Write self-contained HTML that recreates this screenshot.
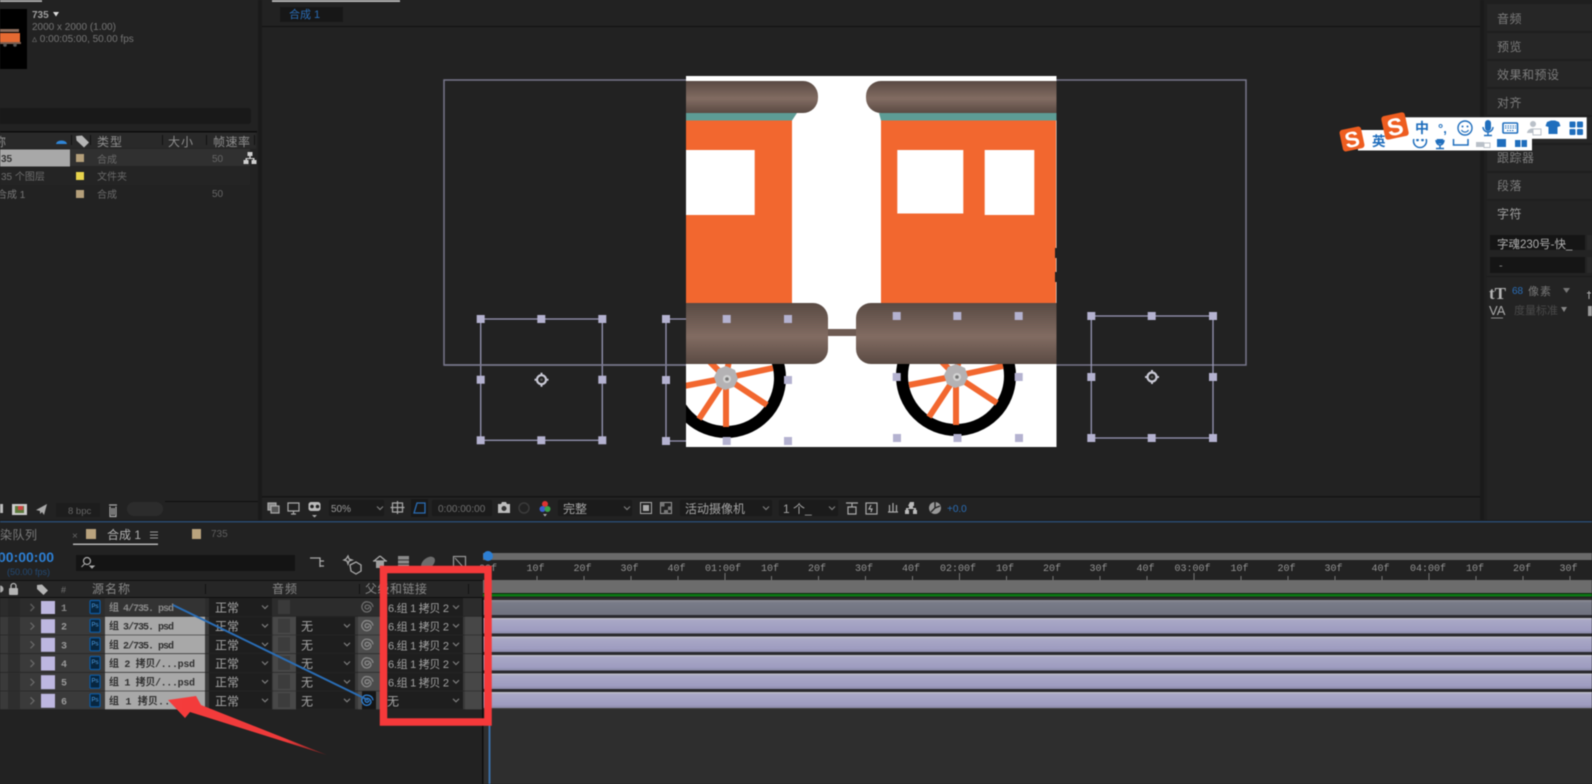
<!DOCTYPE html>
<html lang="zh"><head><meta charset="utf-8"><title>After Effects</title>
<style>
html,body{margin:0;padding:0;background:#222;width:1592px;height:784px;overflow:hidden}
svg{display:block;filter:blur(.45px)}
text{font-family:"Liberation Sans","Noto Sans CJK SC",sans-serif}
.m{font-family:"Liberation Mono","Noto Sans CJK SC",monospace}
.n{font-family:"Liberation Mono","Noto Sans CJK SC",monospace;font-weight:700;font-size:10px;fill:#303030}
.r{font-family:"Liberation Mono",monospace;font-size:10px;fill:#929292;text-anchor:middle}
.t{font-size:12px;fill:#a4a4a4}
.l{font-size:12px;fill:#8e8e8e;letter-spacing:1px}
.d{font-size:10px;fill:#747474}
.p{font-size:11px;fill:#a2a2a2}
</style></head><body>
<svg xmlns="http://www.w3.org/2000/svg" width="1592" height="784" viewBox="0 0 1592 784">
<defs>
<linearGradient id="br" x1="0" y1="0" x2="0" y2="1"><stop offset="0" stop-color="#594a43"/><stop offset=".55" stop-color="#826c62"/><stop offset="1" stop-color="#5a4a43"/></linearGradient>
<linearGradient id="bar" x1="0" y1="0" x2="0" y2="1"><stop offset="0" stop-color="#c6c6cc"/><stop offset=".14" stop-color="#a9a8c6"/><stop offset=".8" stop-color="#9e9cc0"/><stop offset="1" stop-color="#8b8aa8"/></linearGradient>
<linearGradient id="bar1" x1="0" y1="0" x2="0" y2="1"><stop offset="0" stop-color="#8d8f96"/><stop offset=".2" stop-color="#787b88"/><stop offset="1" stop-color="#70737f"/></linearGradient>
<linearGradient id="arrow" x1="0" y1="0" x2="1" y2="0"><stop offset="0" stop-color="#f53c3c"/><stop offset=".75" stop-color="#ee3a3a"/><stop offset="1" stop-color="#6c2020"/></linearGradient>
<clipPath id="img"><rect x="686" y="76" width="370.500" height="371"/></clipPath>
<clipPath id="ime"><rect x="1340" y="139" width="200" height="14"/></clipPath>
<g id="h"><rect x="-4" y="-4" width="8" height="8" fill="#b4b2d0"/></g>
<g id="chev"><path d="M-3-1.500L0 1.500 3-1.500" fill="none" stroke="#7c7c7c" stroke-width="1.200"/></g>
<g id="spiral"><path d="M1 0a2 2 0 1 1-2-2 3.800 3.800 0 0 1 4 4 4.500 4.500 0 0 1-8 1 5 5 0 0 1 5-8 5.500 5.500 0 0 1 5 5" fill="none" stroke="currentColor" stroke-width="1.300"/></g>
<g id="ps"><rect x="0" y="0" width="10" height="13" rx="1" fill="#08263f" stroke="#0d5ba5" stroke-width="1.200"/></g>
<g id="anchor"><circle r="4.500" fill="none" stroke="#c8c8d4" stroke-width="2.200"/><path d="M-7 0h3M4 0h3M0-7v3M0 4v3" stroke="#c8c8d4" stroke-width="2"/><circle r="1.300" fill="#555"/></g>
<g id="wheel"><circle r="54" fill="none" stroke="#000" stroke-width="12"/>
<g stroke="#f2672f" stroke-width="6"><path d="M0 0L47-10M0 0L41 27M0 0V49M0 0L-27 41M0 0L-47 9M0 0L-24-24M0 0L8-47"/></g>
<path d="M0-12L9-8 12 1 8 9-1 12-9 8-12-1-8-9Z" fill="#b4b2b4"/><circle cx="1" cy="1" r="4" fill="#d2d2d2"/><circle cx="1" cy="1" r="1.800" fill="#777"/></g>
</defs>

<rect width="1592" height="784" fill="#222"/>

<!-- left project panel -->
<rect x="0" y="0" width="42" height="2" fill="#aaa"/>
<rect x="0" y="9" width="27" height="60" fill="#000"/>
<g><rect x="0" y="29" width="19" height="3" fill="#8a6a5a"/><rect x="0" y="33" width="20" height="9" fill="#e56a32"/><rect x="0" y="42" width="21" height="2" fill="#805f50"/><circle cx="5" cy="45" r="1.800" fill="#555"/><circle cx="15" cy="45" r="1.800" fill="#555"/></g>
<text x="32" y="18" font-size="10" font-weight="700" fill="#9f9f9f">735</text><path d="M53 12h6l-3 4.500z" fill="#ddd"/>
<text x="32" y="30" class="d">2000 x 2000 (1.00)</text>
<text x="32" y="42" class="d">▵ 0:00:05:00, 50.00 fps</text>
<rect x="-6" y="108" width="257" height="16" rx="3" fill="#191919"/>
<rect x="0" y="131" width="257" height="1.500" fill="#0c0c0c"/>
<rect x="0" y="132.500" width="256" height="16" fill="#292929"/>
<text x="-6" y="146" font-size="12" fill="#8e8e8e">称</text>
<path d="M56 144a5.500 3.500 0 0 1 11 0z" fill="#2f86d8"/>
<path d="M76 136l6-.5 7 7-5 5-7.500-7z" fill="#b5b5b5"/>
<text x="97" y="146" class="l">类型</text>
<text x="168" y="146" class="l">大小</text>
<text x="213" y="146" class="l" style="letter-spacing:.5px">帧速率</text>
<g fill="#111"><rect x="71" y="135" width="1" height="10"/><rect x="90" y="135" width="1" height="10"/><rect x="162" y="135" width="1" height="10"/><rect x="206" y="135" width="1" height="10"/><rect x="254" y="135" width="1" height="10"/></g>
<rect x="0" y="149" width="250" height="17" fill="#303030"/>
<rect x="0" y="149.500" width="70" height="17" fill="#a8a8a8"/>
<text x="1" y="162" font-size="10" font-weight="700" fill="#333">35</text>
<rect x="76" y="154" width="8" height="8" fill="#b49f7a"/>
<text x="97" y="163" font-size="10" fill="#686868">合成</text>
<text x="212" y="162" font-size="10" fill="#666">50</text>
<path d="M247.500 152h5v4h-1.800v2h3.800v2h2v4h-5v-4h1.500v-1h-6v1h1.500v4h-5v-4h2v-2h3.800v-2h-1.800z" fill="#cfcfcf"/>
<rect x="0" y="167" width="250" height="18" fill="#242424"/>
<text x="1" y="180" font-size="10" fill="#6e6e6e">35 个图层</text>
<rect x="76" y="172" width="8" height="8" fill="#e8d44c"/>
<text x="97" y="180" font-size="10" fill="#686868">文件夹</text>
<text x="-3" y="198" font-size="10" fill="#777">合成 1</text>
<rect x="76" y="190" width="8" height="8" fill="#b49f7a"/>
<text x="97" y="198" font-size="10" fill="#686868">合成</text>
<text x="212" y="197" font-size="10" fill="#666">50</text>

<!-- left footer -->
<rect x="165" y="501" width="93" height="1" fill="#0f0f0f"/>
<rect x="0" y="504" width="3" height="9" fill="#bbb"/>
<rect x="12" y="504" width="15" height="11" fill="#ccc"/><rect x="15" y="506" width="9" height="7" fill="#5c7a3c"/><rect x="18" y="506" width="5" height="4" fill="#c44"/>
<path d="M36 510l11-6-3 11-2-3-2 2v-3z" fill="#a9a9a9"/>
<rect x="56" y="503" width="44" height="14" fill="#1d1d1d"/>
<text x="68" y="514" font-size="9.500" fill="#666">8 bpc</text>
<path d="M109 505h8M110 506.500v10h6v-10M112 508v7M114 508v7" fill="none" stroke="#aaa" stroke-width="1.200"/>
<rect x="127" y="502" width="36" height="14" rx="7" fill="#2c2c2c"/>

<!-- vertical dividers -->
<rect x="258" y="0" width="4" height="521" fill="#1a1a1a"/>
<rect x="1480" y="0" width="4" height="521" fill="#1a1a1a"/>

<!-- comp panel top -->
<rect x="272" y="0" width="128" height="2" fill="#b4b4b4"/>
<rect x="280" y="7" width="63" height="15" fill="#171717"/>
<text x="289" y="18" font-size="11" fill="#2a6cb5">合成 1</text>
<rect x="262" y="26" width="1218" height="1" fill="#111"/>

<!-- composition box -->
<rect x="444" y="80" width="802" height="285" fill="none" stroke="#77768a" stroke-width="1.500"/>
<rect x="480.700" y="319" width="121.600" height="121.300" fill="none" stroke="#9796b4" stroke-width="1.300"/>
<path d="M666 319h21M666 319v122M666 441h21" fill="none" stroke="#9796b4" stroke-width="1.300"/>
<rect x="1091.300" y="316" width="121.700" height="122" fill="none" stroke="#9796b4" stroke-width="1.300"/>

<!-- image -->
<rect x="686" y="76" width="370.500" height="371" fill="#fff"/>
<g clip-path="url(#img)">
<use href="#wheel" x="726" y="378"/>
<use href="#wheel" x="956" y="376"/>
<rect x="670" y="81" width="148" height="32" rx="15" fill="url(#br)"/>
<rect x="866" y="81" width="210" height="32" rx="15" fill="url(#br)"/>
<path d="M686 113H797L792 120.500H686Z" fill="#5d9c95"/>
<path d="M879 113H1057V120.500H881Z" fill="#5d9c95"/>
<rect x="686" y="120.500" width="106" height="183" fill="#f2672f"/>
<rect x="881" y="120.500" width="175" height="183" fill="#f2672f"/>
<rect x="686" y="150" width="68.700" height="65" fill="#fff"/>
<rect x="897.300" y="150" width="66" height="63.500" fill="#fff"/>
<rect x="984.700" y="150" width="49.600" height="65" fill="#fff"/>
<rect x="826" y="329" width="32" height="7" fill="#6d5a52"/>
<rect x="660" y="303" width="168" height="61" rx="15" fill="url(#br)"/>
<rect x="856" y="303" width="220" height="61" rx="15" fill="url(#br)"/>
<rect x="1055" y="248" width="2" height="10" fill="#222"/><rect x="1055" y="272" width="2" height="10" fill="#222"/>
</g>
<path d="M444 365h242" stroke="#77768a" stroke-width="1.500"/>

<!-- handles -->
<g>
<use href="#h" x="480.700" y="319"/><use href="#h" x="541.300" y="319"/><use href="#h" x="602.300" y="319"/>
<use href="#h" x="480.700" y="379.700"/><use href="#h" x="602.300" y="379.700"/>
<use href="#h" x="480.700" y="440.300"/><use href="#h" x="541.300" y="440.300"/><use href="#h" x="602.300" y="440.300"/>
<use href="#anchor" x="541.500" y="379.700"/>
<use href="#h" x="666" y="319"/><use href="#h" x="726.700" y="319"/><use href="#h" x="788" y="319"/>
<use href="#h" x="666" y="380"/><use href="#h" x="788" y="380"/>
<use href="#h" x="666" y="441"/><use href="#h" x="726.700" y="441"/><use href="#h" x="788" y="441"/>
<use href="#h" x="896.700" y="316"/><use href="#h" x="957.300" y="316"/><use href="#h" x="1018.700" y="316"/>
<use href="#h" x="896.700" y="377"/><use href="#h" x="1018.700" y="377"/>
<use href="#h" x="897" y="438"/><use href="#h" x="957.500" y="438"/><use href="#h" x="1019" y="438"/>
<use href="#h" x="1091.300" y="316"/><use href="#h" x="1151.700" y="316"/><use href="#h" x="1213" y="316"/>
<use href="#h" x="1091.300" y="377"/><use href="#h" x="1213" y="377"/>
<use href="#h" x="1091.300" y="438"/><use href="#h" x="1151.700" y="438"/><use href="#h" x="1213" y="438"/>
<use href="#anchor" x="1152" y="377"/>
</g>

<!-- comp footer -->
<rect x="262" y="496" width="1218" height="1.500" fill="#141414"/>
<g fill="none" stroke="#aaa" stroke-width="1.200">
<rect x="268" y="503" width="8" height="7" fill="#888"/><rect x="271" y="506" width="8" height="7" fill="#555"/>
<path d="M288 503h11v8h-11zM291 514h5M293.500 511v3"/>
<rect x="392.500" y="503" width="10" height="9"/><path d="M397.500 501v13M390.500 507.500h14"/>
</g>
<path d="M308.500 504a3 3 0 0 1 3-2h6a3 3 0 0 1 3 2v5a3 3 0 0 1-3 2h-6a3 3 0 0 1-3-2z" fill="#bbb"/><circle cx="312" cy="506.500" r="1.800" fill="#222"/><circle cx="317.500" cy="506.500" r="1.800" fill="#222"/><path d="M312 515h5l-2.500 2.500z" fill="#aaa"/>
<rect x="329" y="500" width="55" height="16" fill="#1b1b1b"/>
<text x="331" y="512" font-size="10" fill="#999">50%</text><use href="#chev" x="380" y="508"/>
<rect x="411" y="499" width="17" height="18" fill="#181818"/>
<path d="M414 513l3-10h8v10z" fill="none" stroke="#2a6db5" stroke-width="1.300"/>
<rect x="432" y="500" width="60" height="16" fill="#1b1b1b"/>
<text x="438" y="512" font-size="10" fill="#6d6d6d">0:00:00:00</text>
<path d="M498 504h3l1-2h4l1 2h3v9h-12z" fill="#bdbdbd"/><circle cx="504" cy="508.500" r="2.500" fill="#333"/>
<circle cx="524" cy="508" r="5" fill="none" stroke="#3a3a3a" stroke-width="1.500"/>
<circle cx="545" cy="504" r="3" fill="#d33"/><circle cx="542.500" cy="509" r="3" fill="#3a5fd0"/><circle cx="547.500" cy="509" r="3" fill="#3aa04a"/><path d="M543 514h4l-2 2.500z" fill="#aaa"/>
<rect x="558" y="500" width="74" height="16" fill="#1b1b1b"/>
<text x="563" y="513" font-size="12" fill="#a4a4a4">完整</text><use href="#chev" x="627" y="508"/>
<rect x="640.500" y="502.500" width="11" height="11" fill="none" stroke="#aaa"/><rect x="643" y="505" width="6" height="6" fill="#aaa"/>
<rect x="660.500" y="502.500" width="11" height="11" fill="none" stroke="#999"/><path d="M660.500 502.500h4v4h-4zM668 506.500h3.500v3.500H668zM664 510h4v3.500h-4z" fill="#777"/>
<rect x="680" y="500" width="92" height="16" fill="#1b1b1b"/>
<text x="685" y="513" font-size="12" fill="#a4a4a4">活动摄像机</text><use href="#chev" x="766" y="508"/>
<rect x="779" y="500" width="59" height="16" fill="#1b1b1b"/>
<text x="783" y="513" font-size="12" fill="#a4a4a4">1 个_</text><use href="#chev" x="832" y="508"/>
<g fill="none" stroke="#aaa" stroke-width="1.200"><path d="M846 503h12M852 503v4M848 507h8v7h-8z"/><rect x="866" y="503" width="11" height="11"/><path d="M871 505l-2 4h3l-1 3"/><path d="M888 512h10M889.500 505v7M893 503v9M896.500 505v7"/></g>
<path d="M910 502h4v4h-1v2h3v2h1v4h-4v-4h1v-1h-6v1h1v4h-4v-4h1v-2h3v-2h-1z" fill="#bbb"/>
<circle cx="935" cy="508" r="6" fill="#999"/><path d="M935 502v6l5-2M935 508l-4 4" stroke="#222" stroke-width="1.400" fill="none"/>
<text x="947" y="512" font-size="10" fill="#2a6db5">+0.0</text>

<!-- right panel -->
<rect x="1484" y="0" width="108" height="521" fill="#1f1f1f"/>
<g fill="#262626"><rect x="1487" y="4" width="105" height="27"/><rect x="1487" y="33" width="105" height="26"/><rect x="1487" y="61" width="105" height="26"/><rect x="1487" y="89" width="105" height="26"/><rect x="1487" y="117" width="105" height="26"/><rect x="1487" y="145" width="105" height="26"/><rect x="1487" y="173" width="105" height="26"/><rect x="1487" y="201" width="105" height="320" fill="#232323"/></g>
<g font-size="12" fill="#7c7c7c" letter-spacing=".5">
<text x="1497" y="23">音频</text><text x="1497" y="51">预览</text><text x="1497" y="79">效果和预设</text><text x="1497" y="107">对齐</text><text x="1497" y="162">跟踪器</text><text x="1497" y="190">段落</text><text x="1497" y="218" fill="#a0a0a0">字符</text></g>
<rect x="1490" y="235" width="95" height="15" fill="#151515"/><rect x="1587" y="235" width="5" height="15" fill="#2a2a2a"/>
<text x="1497" y="248" font-size="11.500" fill="#b0b0b0">字魂230号-快_</text>
<rect x="1490" y="257" width="95" height="16" fill="#151515"/><rect x="1587" y="257" width="5" height="16" fill="#2a2a2a"/>
<text x="1499" y="269" font-size="11" fill="#888">-</text>
<rect x="1487" y="276" width="105" height="1" fill="#1a1a1a"/>
<text x="1489" y="299" font-size="17" font-weight="700" fill="#b5b5b5" style="font-family:'Liberation Serif',serif">tT</text>
<text x="1512" y="294" font-size="10" fill="#2a6db5">68</text>
<text x="1528" y="295" font-size="11" fill="#777" letter-spacing="1">像素</text>
<path d="M1563 288h7l-3.500 5z" fill="#777"/>
<text x="1489" y="315" font-size="13" fill="#aaa">VA</text>
<path d="M1491 318h12" stroke="#888"/>
<text x="1514" y="314" font-size="11" fill="#4a4a4a">度量标准</text>
<path d="M1561 307h6l-3 5z" fill="#888"/>
<path d="M1589 291v8M1587 293h4" stroke="#aaa" fill="none"/><rect x="1588" y="306" width="4" height="10" fill="#999"/>

<!-- IME lower -->
<rect x="1358" y="130" width="174" height="20.500" fill="#fff"/>
<text x="1372" y="146" font-size="13.500" font-weight="700" fill="#1f6ebd">英</text>
<g clip-path="url(#ime)" fill="none" stroke="#1f6ebd" stroke-width="1.500">
<circle cx="1420" cy="141" r="6.500"/><circle cx="1417.500" cy="140" r=".6"/><circle cx="1422.500" cy="140" r=".6"/>
<path d="M1436 140a4 5 0 0 0 8 0M1440 145v3M1436 148.500h8"/><rect x="1437.500" y="136" width="5" height="7" fill="#1f6ebd"/>
<rect x="1453.500" y="135" width="14.500" height="10"/>
<path d="M1476 142h8v5h-8z" fill="#b9c0c8" stroke="none"/><rect x="1484" y="143" width="6" height="4.500" fill="#fff" stroke="#b9c0c8" stroke-width="1"/>
<path d="M1497 139h9v8h-9z" fill="#1f6ebd" stroke="none"/>
<path d="M1515 140h5.500v7H1515zM1521.500 140h5.500v7h-5.500z" fill="#1f6ebd" stroke="none"/>
</g>
<g transform="rotate(-12 1352 139)"><rect x="1341" y="128" width="22" height="22" rx="3" fill="#ee5d20"/><text x="1352" y="147" font-size="22" font-weight="700" fill="#fff" text-anchor="middle">S</text></g>

<!-- IME upper -->
<rect x="1405" y="117.300" width="181.700" height="21.500" fill="#fff"/>
<g transform="rotate(-12 1395 126)"><rect x="1383" y="114" width="24" height="24" rx="3" fill="#ee5d20"/><text x="1395" y="135" font-size="24" font-weight="700" fill="#fff" text-anchor="middle">S</text></g>
<text x="1415" y="133" font-size="14" font-weight="700" fill="#1f6ebd">中</text>
<text x="1438" y="133" font-size="13" font-weight="700" fill="#1f6ebd">°,</text>
<circle cx="1465" cy="128" r="7" fill="none" stroke="#1f6ebd" stroke-width="1.400"/><circle cx="1462.500" cy="126.500" r="1" fill="#1f6ebd"/><circle cx="1467.500" cy="126.500" r="1" fill="#1f6ebd"/><path d="M1461.500 130a4 4 0 0 0 7 0" fill="none" stroke="#1f6ebd" stroke-width="1.200"/>
<rect x="1485" y="120" width="6" height="11" rx="3" fill="#1f6ebd"/><path d="M1483 127a5 5 0 0 0 10 0M1488 132v3M1484 135.500h8" fill="none" stroke="#1f6ebd" stroke-width="1.400"/>
<rect x="1503" y="123" width="14.500" height="10" rx="1" fill="#fff" stroke="#1f6ebd" stroke-width="1.600"/><path d="M1505 126h11M1505 128h11M1507 130.500h7" stroke="#1f6ebd" stroke-dasharray="1.500 1" fill="none"/>
<circle cx="1533" cy="124" r="3" fill="#b9c0c8"/><path d="M1527 133a6 5 0 0 1 9-4v4z" fill="#b9c0c8"/><rect x="1533" y="129" width="8" height="6" fill="#fff" stroke="#b9c0c8"/>
<path d="M1547 122l4-1.500h4l4 1.500 1.500 4-3 1v7h-9v-7l-3-1z" fill="#1f6ebd"/>
<rect x="1569.500" y="121.500" width="6" height="6" rx="1" fill="#1f6ebd"/><rect x="1577" y="121.500" width="6" height="6" rx="1" fill="#1f6ebd"/><rect x="1569.500" y="129" width="6" height="6" rx="1" fill="#1f6ebd"/><rect x="1577" y="129" width="6" height="6" rx="1" fill="#1f6ebd"/>

<!-- blue separator -->
<rect x="0" y="520" width="1592" height="1" fill="#1a1a1a"/>
<rect x="0" y="521" width="1592" height="1.500" fill="#2a4a6e"/>

<!-- timeline tabs -->
<text x="0" y="539" font-size="12" fill="#7c7c7c" letter-spacing=".5">染队列</text>
<text x="72" y="539" font-size="10" fill="#666">×</text>
<rect x="86" y="529" width="10" height="10" fill="#b9a37e"/>
<text x="107" y="539" font-size="12" fill="#b0b0b0">合成 1</text>
<path d="M150 532h8M150 535h8M150 538h8" stroke="#999" fill="none"/>
<rect x="73" y="543.500" width="85" height="1.500" fill="#b4b4b4"/>
<rect x="192" y="529" width="9" height="10" fill="#b9a37e"/>
<text x="211" y="537" font-size="10" fill="#5e5e5e">735</text>
<text x="-2" y="562" font-size="14" font-weight="700" fill="#2d7fd3">00:00:00</text>
<text x="7" y="575" font-size="9" fill="#234a74">(50.00 fps)</text>
<rect x="76" y="555" width="219" height="16" fill="#141414"/>
<circle cx="87" cy="561" r="3.500" fill="none" stroke="#aaa" stroke-width="1.200"/><path d="M84.500 564l-3 3M90 566h4l-2 2z" stroke="#aaa" fill="#aaa"/>
<g fill="none" stroke="#a8a8a8" stroke-width="1.300">
<path d="M310 558h6M314 558h6v9M320 561h4M320 566h4"/>
<path d="M346 559l2-3 1 3 3 1-3 1-1 3-1-3-3-1zM350 565l6-3 5 3v6l-5 3-5-3z"/>
<path d="M373 561h14M380 556l-6 5M380 556l6 5"/>
</g>
<path d="M376 561h8v7h-8z" fill="#a0a0a0"/><rect x="398" y="556" width="11" height="14" fill="#8a8a8a"/><path d="M398 560h11M398 564h11" stroke="#333"/>
<ellipse cx="428" cy="563" rx="8" ry="5" transform="rotate(-40 428 563)" fill="#6c6c6c"/>
<rect x="453.500" y="556.500" width="12" height="13" fill="none" stroke="#999" stroke-width="1.200"/><path d="M455 558l9 10" stroke="#999"/>

<!-- timeline column header -->
<rect x="0" y="580" width="484" height="1" fill="#111"/>
<rect x="0" y="581" width="484" height="16" fill="#262626"/>
<rect x="0" y="597" width="484" height="1" fill="#0e0e0e"/>
<circle cx="0" cy="589" r="3.500" fill="#aaa"/>
<rect x="9" y="588" width="9" height="7" rx="1" fill="#b4b4b4"/><path d="M11 588v-2a2.500 2.500 0 0 1 5 0v2" fill="none" stroke="#b4b4b4" stroke-width="1.300"/>
<path d="M37 585l5-.5 6 6-4.500 4.500-6.500-6z" fill="#b5b5b5"/>
<text x="61" y="593" font-size="9" fill="#777">#</text>
<text x="92" y="593" font-size="12" fill="#888" letter-spacing="1">源名称</text>
<text x="272" y="593" font-size="12" fill="#888" letter-spacing="1">音频</text>
<text x="365" y="593" font-size="12" fill="#888" letter-spacing=".5">父级和链接</text>
<g fill="#111"><rect x="205" y="584" width="1" height="10"/><rect x="359" y="584" width="1" height="10"/><rect x="468" y="584" width="1" height="10"/></g>

<!-- rows -->
<g transform="translate(0,598)">
<rect width="484" height="18" fill="#2c2c2c"/><rect x="8" width="12" height="18" fill="#272727"/>
<path d="M30.500 6l3.500 3.500-3.500 3.500" fill="none" stroke="#5e5e5e" stroke-width="1.300"/><rect x="41" y="3" width="14" height="13" fill="#bdb7e0"/>
<text x="61" y="13" class="m" font-size="10" font-weight="700" fill="#888">1</text>
<use href="#ps" x="90" y="2.500"/><text x="91.500" y="10" font-size="6" fill="#4ea0e8">Ps</text>
<rect x="105" width="100" height="18" fill="#333"/><text x="109" y="13" class="n" style="fill:#8a8a8a" textLength="65">组 4/735. psd</text>
<rect x="209" width="63" height="18" fill="#1e1e1e"/><text x="215" y="14" class="t">正常</text><use href="#chev" x="265" y="9"/>
<rect x="278" y="2" width="12" height="14" fill="#3a3a3a"/>
<use href="#spiral" x="368" y="9" color="#6d6d6d"/>
<rect x="385" width="78" height="18" fill="#1e1e1e"/><text x="388" y="14" class="p" textLength="61">6.组 1 拷贝 2</text><use href="#chev" x="456" y="9"/>
</g>
<g transform="translate(0,616.700)">
<rect width="484" height="18" fill="#3a3a3a"/><rect x="8" width="12" height="18" fill="#2e2e2e"/>
<path d="M30.500 6l3.500 3.500-3.500 3.500" fill="none" stroke="#686868" stroke-width="1.300"/><rect x="41" y="2.500" width="14" height="14" fill="#bdb7e0"/>
<text x="61" y="13" class="m" font-size="10" font-weight="700" fill="#999">2</text>
<use href="#ps" x="90" y="2.500"/><text x="91.500" y="10" font-size="6" fill="#4ea0e8">Ps</text>
<rect x="105" width="100" height="18" fill="#a8a8a8"/><text x="109" y="13" class="n" textLength="65">组 3/735. psd</text>
<rect x="209" width="63" height="18" fill="#1e1e1e"/><text x="215" y="14" class="t">正常</text><use href="#chev" x="265" y="9"/>
<rect x="273" width="23" height="18" fill="#484848"/><rect x="278" y="2" width="12" height="14" fill="#3c3c3c"/>
<rect x="296" width="59" height="18" fill="#1e1e1e"/><text x="301" y="14" class="t">无</text><use href="#chev" x="347" y="9"/>
<rect x="358" width="22" height="18" fill="#4c4c4c"/><use href="#spiral" x="368" y="9" color="#8a8a8a"/>
<rect x="385" width="78" height="18" fill="#1e1e1e"/><text x="388" y="14" class="p" textLength="61">6.组 1 拷贝 2</text><use href="#chev" x="456" y="9"/>
<rect x="465" width="19" height="18" fill="#474747"/>
</g>
<g transform="translate(0,635.300)">
<rect width="484" height="18" fill="#3a3a3a"/><rect x="8" width="12" height="18" fill="#2e2e2e"/>
<path d="M30.500 6l3.500 3.500-3.500 3.500" fill="none" stroke="#686868" stroke-width="1.300"/><rect x="41" y="2.500" width="14" height="14" fill="#bdb7e0"/>
<text x="61" y="13" class="m" font-size="10" font-weight="700" fill="#999">3</text>
<use href="#ps" x="90" y="2.500"/><text x="91.500" y="10" font-size="6" fill="#4ea0e8">Ps</text>
<rect x="105" width="100" height="18" fill="#a8a8a8"/><text x="109" y="13" class="n" textLength="65">组 2/735. psd</text>
<rect x="209" width="63" height="18" fill="#1e1e1e"/><text x="215" y="14" class="t">正常</text><use href="#chev" x="265" y="9"/>
<rect x="273" width="23" height="18" fill="#484848"/><rect x="278" y="2" width="12" height="14" fill="#3c3c3c"/>
<rect x="296" width="59" height="18" fill="#1e1e1e"/><text x="301" y="14" class="t">无</text><use href="#chev" x="347" y="9"/>
<rect x="358" width="22" height="18" fill="#4c4c4c"/><use href="#spiral" x="368" y="9" color="#8a8a8a"/>
<rect x="385" width="78" height="18" fill="#1e1e1e"/><text x="388" y="14" class="p" textLength="61">6.组 1 拷贝 2</text><use href="#chev" x="456" y="9"/>
<rect x="465" width="19" height="18" fill="#474747"/>
</g>
<g transform="translate(0,654)">
<rect width="484" height="18" fill="#3a3a3a"/><rect x="8" width="12" height="18" fill="#2e2e2e"/>
<path d="M30.500 6l3.500 3.500-3.500 3.500" fill="none" stroke="#686868" stroke-width="1.300"/><rect x="41" y="2.500" width="14" height="14" fill="#bdb7e0"/>
<text x="61" y="13" class="m" font-size="10" font-weight="700" fill="#999">4</text>
<use href="#ps" x="90" y="2.500"/><text x="91.500" y="10" font-size="6" fill="#4ea0e8">Ps</text>
<rect x="105" width="100" height="18" fill="#a8a8a8"/><text x="109" y="13" class="n" textLength="86">组 2 拷贝/...psd</text>
<rect x="209" width="63" height="18" fill="#1e1e1e"/><text x="215" y="14" class="t">正常</text><use href="#chev" x="265" y="9"/>
<rect x="273" width="23" height="18" fill="#484848"/><rect x="278" y="2" width="12" height="14" fill="#3c3c3c"/>
<rect x="296" width="59" height="18" fill="#1e1e1e"/><text x="301" y="14" class="t">无</text><use href="#chev" x="347" y="9"/>
<rect x="358" width="22" height="18" fill="#4c4c4c"/><use href="#spiral" x="368" y="9" color="#8a8a8a"/>
<rect x="385" width="78" height="18" fill="#1e1e1e"/><text x="388" y="14" class="p" textLength="61">6.组 1 拷贝 2</text><use href="#chev" x="456" y="9"/>
<rect x="465" width="19" height="18" fill="#474747"/>
</g>
<g transform="translate(0,672.700)">
<rect width="484" height="18" fill="#3a3a3a"/><rect x="8" width="12" height="18" fill="#2e2e2e"/>
<path d="M30.500 6l3.500 3.500-3.500 3.500" fill="none" stroke="#686868" stroke-width="1.300"/><rect x="41" y="2.500" width="14" height="14" fill="#bdb7e0"/>
<text x="61" y="13" class="m" font-size="10" font-weight="700" fill="#999">5</text>
<use href="#ps" x="90" y="2.500"/><text x="91.500" y="10" font-size="6" fill="#4ea0e8">Ps</text>
<rect x="105" width="100" height="18" fill="#a8a8a8"/><text x="109" y="13" class="n" textLength="86">组 1 拷贝/...psd</text>
<rect x="209" width="63" height="18" fill="#1e1e1e"/><text x="215" y="14" class="t">正常</text><use href="#chev" x="265" y="9"/>
<rect x="273" width="23" height="18" fill="#484848"/><rect x="278" y="2" width="12" height="14" fill="#3c3c3c"/>
<rect x="296" width="59" height="18" fill="#1e1e1e"/><text x="301" y="14" class="t">无</text><use href="#chev" x="347" y="9"/>
<rect x="358" width="22" height="18" fill="#4c4c4c"/><use href="#spiral" x="368" y="9" color="#8a8a8a"/>
<rect x="385" width="78" height="18" fill="#1e1e1e"/><text x="388" y="14" class="p" textLength="61">6.组 1 拷贝 2</text><use href="#chev" x="456" y="9"/>
<rect x="465" width="19" height="18" fill="#474747"/>
</g>
<g transform="translate(0,691.300)">
<rect width="484" height="18" fill="#3a3a3a"/><rect x="8" width="12" height="18" fill="#2e2e2e"/>
<path d="M30.500 6l3.500 3.500-3.500 3.500" fill="none" stroke="#686868" stroke-width="1.300"/><rect x="41" y="2.500" width="14" height="14" fill="#bdb7e0"/>
<text x="61" y="13" class="m" font-size="10" font-weight="700" fill="#999">6</text>
<use href="#ps" x="90" y="2.500"/><text x="91.500" y="10" font-size="6" fill="#4ea0e8">Ps</text>
<rect x="105" width="100" height="18" fill="#a8a8a8"/><text x="109" y="13" class="n" textLength="86">组 1 拷贝...psd</text>
<rect x="209" width="63" height="18" fill="#1e1e1e"/><text x="215" y="14" class="t">正常</text><use href="#chev" x="265" y="9"/>
<rect x="273" width="23" height="18" fill="#484848"/><rect x="278" y="2" width="12" height="14" fill="#3c3c3c"/>
<rect x="296" width="59" height="18" fill="#1e1e1e"/><text x="301" y="14" class="t">无</text><use href="#chev" x="347" y="9"/>
<rect x="358" width="4" height="18" fill="#4c4c4c"/><rect x="362" width="14" height="18" fill="#151515"/><rect x="376" width="4" height="18" fill="#4c4c4c"/><use href="#spiral" x="368" y="9" color="#2d7fd3"/>
<rect x="385" width="78" height="18" fill="#1e1e1e"/><text x="387" y="14" font-size="12" fill="#a4a4a4">无</text><use href="#chev" x="456" y="9"/>
<rect x="465" width="19" height="18" fill="#474747"/>
</g>

<!-- timeline right -->
<rect x="483" y="598" width="1109" height="186" fill="#2e2e2e"/>
<rect x="483" y="553" width="1109" height="7" fill="#6a6a6a"/>
<circle cx="488" cy="556" r="5" fill="#2d7fd3"/>
<rect x="483" y="580" width="1109" height="13" fill="#6c6c6c"/>
<rect x="483" y="593" width="1109" height="1" fill="#0a2a0a"/><rect x="483" y="594" width="1109" height="2.500" fill="#0b7a14"/><rect x="483" y="596.500" width="1109" height="1.500" fill="#222"/>
<rect x="483" y="600" width="1109" height="15" fill="url(#bar1)"/>
<rect x="483" y="615" width="1109" height="3" fill="#2a2a2e"/>
<rect x="483" y="618" width="1109" height="15.500" fill="url(#bar)"/><rect x="483" y="633.500" width="1109" height="3" fill="#2a2a2e"/>
<rect x="483" y="636.500" width="1109" height="15.500" fill="url(#bar)"/><rect x="483" y="652" width="1109" height="3" fill="#2a2a2e"/>
<rect x="483" y="655" width="1109" height="15.500" fill="url(#bar)"/><rect x="483" y="670.500" width="1109" height="3" fill="#2a2a2e"/>
<rect x="483" y="673.500" width="1109" height="15.500" fill="url(#bar)"/><rect x="483" y="689" width="1109" height="3" fill="#2a2a2e"/>
<rect x="483" y="692" width="1109" height="16" fill="url(#bar)"/><rect x="483" y="708" width="1109" height="1" fill="#444"/>
<rect x="482" y="598" width="1.500" height="186" fill="#0c0c0c"/>
<rect x="488.500" y="570" width="2" height="214" fill="#3b6ea5"/>
<g>
<text x="488" y="571" class="r">00f</text><text x="535.500" y="571" class="r">10f</text><text x="582.500" y="571" class="r">20f</text><text x="629.500" y="571" class="r">30f</text><text x="676.500" y="571" class="r">40f</text><text x="723" y="571" class="r">01:00f</text><text x="770" y="571" class="r">10f</text><text x="817" y="571" class="r">20f</text><text x="864" y="571" class="r">30f</text><text x="911" y="571" class="r">40f</text><text x="958" y="571" class="r">02:00f</text><text x="1005" y="571" class="r">10f</text><text x="1052" y="571" class="r">20f</text><text x="1098.500" y="571" class="r">30f</text><text x="1145.500" y="571" class="r">40f</text><text x="1192.500" y="571" class="r">03:00f</text><text x="1239.500" y="571" class="r">10f</text><text x="1286.500" y="571" class="r">20f</text><text x="1333.500" y="571" class="r">30f</text><text x="1380.500" y="571" class="r">40f</text><text x="1428" y="571" class="r">04:00f</text><text x="1475" y="571" class="r">10f</text><text x="1522" y="571" class="r">20f</text><text x="1568.500" y="571" class="r">30f</text>
</g>
<path d="M537 576v4M584 576v4M631 576v4M678 576v4M725 573v7M771.500 576v4M818.500 576v4M865.500 576v4M912.500 576v4M959.500 573v7M1006.500 576v4M1053 576v4M1100 576v4M1147 576v4M1194 573v7M1241 576v4M1288 576v4M1335 576v4M1382 576v4M1429 573v7M1476 576v4M1523 576v4M1570 576v4" stroke="#777" fill="none"/>

<!-- annotations -->
<path d="M173 605L368 700" stroke="#2a6db5" stroke-width="2" fill="none"/>
<rect x="383.500" y="569.500" width="104.500" height="152.500" fill="none" stroke="#f5393a" stroke-width="7.500"/>
<path d="M168 700L196 696 201 705 327 755 190 712 185 718Z" fill="url(#arrow)"/>
</svg>
</body></html>
